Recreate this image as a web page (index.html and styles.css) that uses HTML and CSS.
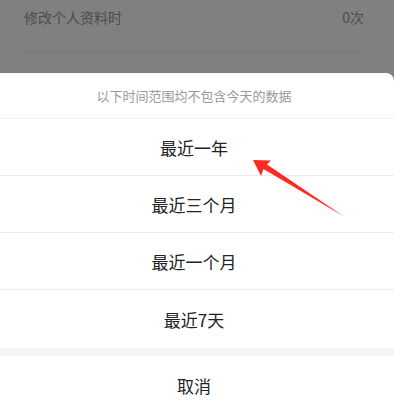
FILE: index.html
```html
<!DOCTYPE html>
<html lang="zh">
<head>
<meta charset="utf-8">
<link rel="stylesheet" href="styles.css">
</head>
<body>
<div class="page">
  <div class="row-bg">
    <span class="row-label">修改个人资料时</span>
    <span class="row-value">0次</span>
  </div>
  <div class="spacer"></div>
  <div class="sheet">
    <div class="sheet-title">以下时间范围均不包含今天的数据</div>
    <div class="option">最近一年</div>
    <div class="option">最近三个月</div>
    <div class="option">最近一个月</div>
    <div class="option last">最近7天</div>
    <div class="gap"></div>
    <div class="option cancel">取消</div>
  </div>
  <svg class="arrow" width="394" height="401" viewBox="0 0 394 401">
    <polygon points="253,160 271,160.5 267,164.5 344,216.5 263.5,169 261,176" fill="#ff2a1f"/>
  </svg>
</div>
</body>
</html>
```

FILE: styles.css
```css
html, body {
  margin: 0;
  padding: 0;
  background: #808080;
  font-family: "Noto Sans CJK SC", "Noto Sans", sans-serif;
}
.page {
  position: relative;
  width: 394px;
  height: 401px;
  overflow: hidden;
}
.row-bg {
  display: flex;
  justify-content: space-between;
  align-items: center;
  height: 34px;
  margin: 0 30px 0 24px;
  font-size: 14px;
  color: #4c4c4c;
}
.row-value {
  font-size: 14px;
}
.spacer {
  height: 18px;
  margin: 0 30px 0 22px;
  border-bottom: 1px solid #787878;
  box-sizing: border-box;
}
.sheet {
  margin-top: 21px;
  background: #fff;
  border-top-right-radius: 8px;
}
.sheet-title {
  height: 46px;
  display: flex;
  align-items: center;
  justify-content: center;
  padding-right: 6px;
  font-size: 13px;
  color: #999;
  border-bottom: 1px solid #efefef;
  box-sizing: border-box;
}
.option {
  height: 57px;
  display: flex;
  align-items: center;
  justify-content: center;
  padding-right: 6px;
  font-size: 17px;
  color: #222;
  border-bottom: 1px solid #ececec;
  box-sizing: border-box;
}
.option.last {
  height: 58px;
  border-bottom: none;
}
.gap {
  height: 8px;
  background: #f5f5f5;
}
.option.cancel {
  border-bottom: none;
  height: 58px;
}
.arrow {
  position: absolute;
  left: 0;
  top: 0;
}
```
